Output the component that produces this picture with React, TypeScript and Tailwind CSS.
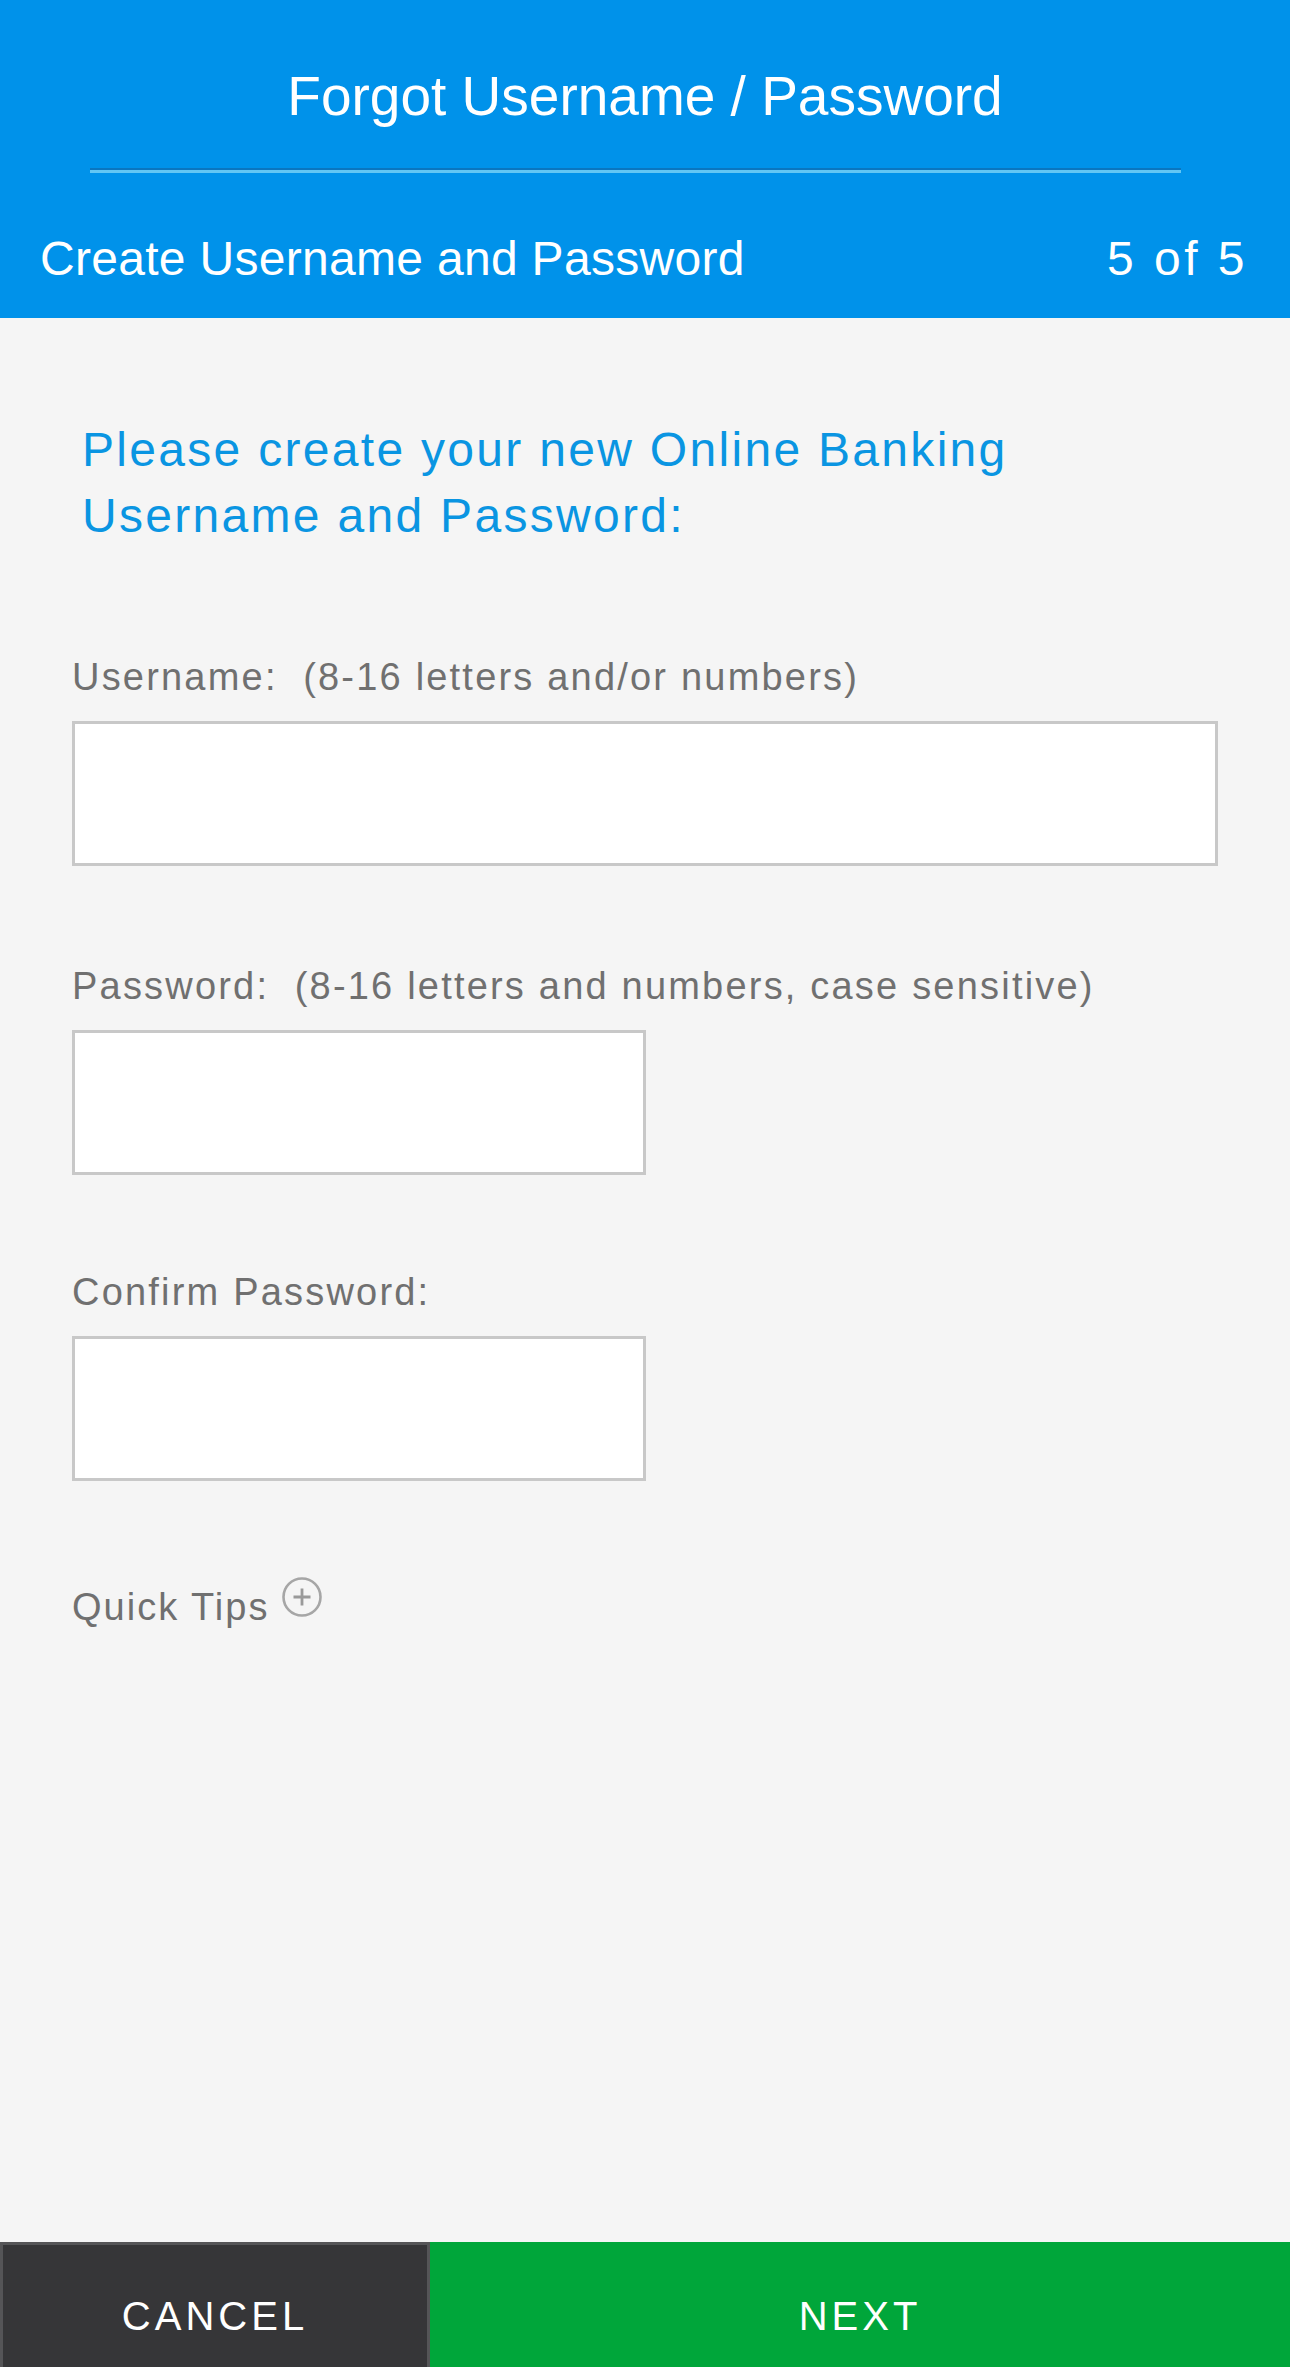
import React from "react";

const font = { fontFamily: '"Liberation Sans", Arial, Helvetica, sans-serif' };

function Field({ label, hint, wide, mt }: { label: string; hint?: string; wide?: boolean; mt: string }) {
  return (
    <div className={`flex flex-col ${mt}`}>
      <div className="text-[38px] leading-[38px] tracking-[2.2px] text-[#707070] whitespace-pre">
        {label}
        {hint ? `  ${hint}` : ""}
      </div>
      <input
        type="text"
        className={`mt-[25px] h-[145px] border-[3px] border-[#c8c8c8] bg-white outline-none ${wide ? "w-[1146px]" : "w-[574px]"}`}
      />
    </div>
  );
}

export default function App() {
  return (
    <div className="flex min-h-screen flex-col bg-[#f5f5f5]" style={font}>
      <header className="flex flex-col bg-[#0092ea] text-white">
        <div className="pt-[69px] text-center text-[55px] leading-[54px]">Forgot Username / Password</div>
        <div className="ml-[90px] mt-[45px] flex w-[1091px] flex-col">
          <div className="h-[2px] bg-[#0a76c0]" />
          <div className="h-[3px] bg-[#62c6f4]" />
        </div>
        <div className="mt-[62px] flex items-center justify-between pb-[35px] pl-[40px] pr-[42px] text-[48px] leading-[48px]">
          <span className="tracking-[0.3px]">Create Username and Password</span>
          <span className="tracking-[3.5px]">5 of 5</span>
        </div>
      </header>

      <main className="flex flex-1 flex-col pl-[72px]">
        <h1 className="ml-[10px] mt-[99px] text-[48px] font-normal leading-[66px] tracking-[2.3px] text-[#0a95e2]">
          Please create your new Online Banking
          <br />
          Username and Password:
        </h1>
        <Field mt="mt-[109px]" label="Username:" hint="(8-16 letters and/or numbers)" wide />
        <Field mt="mt-[101px]" label="Password:" hint="(8-16 letters and numbers, case sensitive)" />
        <Field mt="mt-[98px]" label="Confirm Password:" />
        <div className="mt-[107px] flex items-start">
          <span className="text-[38px] leading-[38px] tracking-[2px] text-[#707070]">Quick Tips</span>
          <svg className="-mt-[12px] ml-[12px]" width="42" height="42" viewBox="0 0 42 42" fill="none">
            <circle cx="21" cy="21" r="18.5" stroke="#a6a6a6" strokeWidth="2.6" />
            <path d="M21 12.5v17M12.5 21h17" stroke="#9a9a9a" strokeWidth="2.8" />
          </svg>
        </div>
      </main>

      <footer className="mt-[60px] flex h-[125px] text-white">
        <div className="h-full w-[430px] border-l-[3px] border-r-[3px] border-t-[3px] border-[#555557] bg-[#363638] pt-[51px] text-center text-[40px] font-light leading-[40px] tracking-[4px]">
          CANCEL
        </div>
        <div className="h-full flex-1 bg-[#00a63a] pt-[54px] text-center text-[40px] font-light leading-[40px] tracking-[4px]">
          NEXT
        </div>
      </footer>
    </div>
  );
}
